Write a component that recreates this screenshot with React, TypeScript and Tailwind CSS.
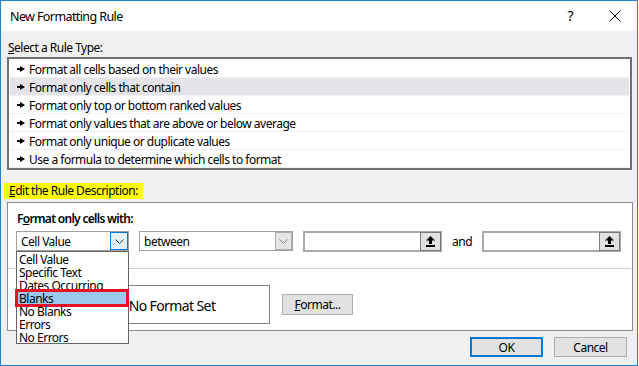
import React from "react";

const rules = [
  "Format all cells based on their values",
  "Format only cells that contain",
  "Format only top or bottom ranked values",
  "Format only values that are above or below average",
  "Format only unique or duplicate values",
  "Use a formula to determine which cells to format",
];

const options = ["Cell Value", "Specific Text", "Dates Occurring", "Blanks", "No Blanks", "Errors", "No Errors"];

function Pointer() {
  return (
    <svg width="8" height="6" viewBox="0 0 8 6" className="shrink-0">
      <rect x="0" y="2" width="5" height="2" fill="#000" />
      <polygon points="3,0 8,3 3,6" fill="#000" />
    </svg>
  );
}

function Chevron({ color = "#333" }: { color?: string }) {
  return (
    <svg width="9" height="5" viewBox="0 0 9 5">
      <polyline points="0.5,0.5 4.5,4.5 8.5,0.5" fill="none" stroke={color} strokeWidth="1" />
    </svg>
  );
}

function UpArrow() {
  return (
    <svg width="9" height="11" viewBox="0 0 9 11">
      <polygon points="4.5,0 9,4.5 6,4.5 6,8 3,8 3,4.5 0,4.5" fill="#000" />
      <rect x="0" y="9" width="9" height="2" fill="#000" />
    </svg>
  );
}

function RefBox() {
  return (
    <div className="w-[139px] h-[21px] border-2 border-[#a9a9a9] bg-white flex justify-end">
      <div className="w-[21px] h-[19px] -mt-[1px] -mr-[1px] bg-[#e1e1e1] border border-[#7a7a7a] flex items-center justify-center">
        <UpArrow />
      </div>
    </div>
  );
}

export default function App() {
  return (
    <div className="w-[639px] h-[366px] bg-white font-['Segoe_UI','Noto_Sans',sans-serif] text-[12px] tracking-[-0.5px] text-black">
      <div className="w-[638px] h-[366px] border border-[#1883d7] flex flex-col">
        {/* Title bar */}
        <div className="h-[30px] bg-white flex items-center justify-between pl-[9px] pr-[16px] shrink-0">
          <span className="text-[12.5px] tracking-[-0.6px] leading-[16px] pt-[1px]">New Formatting Rule</span>
          <div className="flex items-center gap-[36px]">
            <span className="text-[14px] leading-none">?</span>
            <svg width="12" height="12" viewBox="0 0 12 12">
              <line x1="0.5" y1="0.5" x2="11.5" y2="11.5" stroke="#000" strokeWidth="1" />
              <line x1="11.5" y1="0.5" x2="0.5" y2="11.5" stroke="#000" strokeWidth="1" />
            </svg>
          </div>
        </div>

        {/* Body */}
        <div className="flex-1 bg-[#f0f0f0] flex flex-col pt-[8px]">
          <div className="ml-[7px] h-[16px] leading-[17px]">
            <span className="underline">S</span>elect a Rule Type:
          </div>
          <div className="ml-[6px] mt-[2px] w-[625px] h-[113px] border-2 border-[#707070] bg-white p-[1px] flex flex-col">
            {rules.map((r, i) => (
              <div
                key={r}
                className={
                  "h-[18px] flex items-center gap-[4px] pl-[7px] border-b border-[#f0f0f0] " +
                  (i === 1 ? "bg-[#e4e4e8]" : "")
                }
              >
                <Pointer />
                <span className="leading-[18px] pt-[2px]">{r}</span>
              </div>
            ))}
          </div>

          <div className="ml-[3px] mt-[13px] h-[16px] leading-[16px] bg-[#ffff00] px-[5px] self-start">
            <span className="underline">E</span>dit the Rule Description:
          </div>

          {/* Panel */}
          <div className="relative ml-[6px] mt-[3px] w-[626px] h-[129px] bg-white border border-[#8a8a8a] flex flex-col">
            <div className="mt-[7px] ml-[9px] h-[16px] leading-[17px] font-semibold tracking-[-0.7px]">
              F<span className="underline">o</span>rmat only cells with:
            </div>
            <div className="mt-[5px] ml-[8px] h-[20px] flex items-center">
              <div className="w-[113px] h-[20px] border border-[#a0a0a0] flex items-center justify-between pl-[4px]">
                <span className="pt-[1px]">Cell Value</span>
                <div className="w-[18px] h-[18px] bg-[#e5f1fb] border border-[#0078d7] flex items-center justify-center">
                  <Chevron />
                </div>
              </div>
              <div className="ml-[10px] w-[154px] h-[20px] border border-[#a0a0a0] flex items-center justify-between pl-[4px]">
                <span className="pt-[1px]">between</span>
                <div className="w-[17px] h-[18px] bg-[#e5e5e5] border border-[#adadad] flex items-center justify-center">
                  <Chevron color="#888" />
                </div>
              </div>
              <div className="ml-[10px]">
                <RefBox />
              </div>
              <span className="ml-[10px] w-[20px] pt-[1px]">and</span>
              <div className="ml-[10px]">
                <RefBox />
              </div>
            </div>
            <div className="mt-[17px] mr-[1px] h-[1px] bg-[#d2d2d2]" />
            <div className="mt-[16px] ml-[66px] flex items-center">
              <div className="w-[196px] h-[39px] border border-[#808080] flex items-center justify-center text-[14px] tracking-[-0.6px] pt-[1px]">
                No Format Set
              </div>
              <button className="ml-[12px] w-[71px] h-[21px] bg-[#e1e1e1] border border-[#adadad] flex items-center justify-center text-[12px] pt-[1px]">
                <span className="underline">F</span>ormat...
              </button>
            </div>

            {/* Dropdown list overlay */}
            <div className="absolute left-[8px] top-[48px] w-[113px] h-[93px] bg-white border border-[#646464] flex flex-col">
              {options.map((o) => (
                <div
                  key={o}
                  className={
                    "relative h-[13px] leading-[13px] pl-[2px] " + (o === "Blanks" ? "bg-[#99c9ef]" : "")
                  }
                >
                  <span className="relative top-[1px]">{o}</span>
                  {o === "Blanks" && (
                    <div className="absolute -top-[2px] -bottom-[3px] -left-[2px] -right-[1px] border-[3px] border-[#e81123]" />
                  )}
                </div>
              ))}
            </div>
          </div>

          {/* Buttons */}
          <div className="mt-[6px] flex justify-end gap-[11px] pr-[10px]">
            <button className="w-[73px] h-[20px] bg-[#e1e1e1] border-2 border-[#0078d7] flex items-center justify-center text-[12px] pt-[1px]">
              OK
            </button>
            <button className="w-[73px] h-[20px] bg-[#e1e1e1] border border-[#adadad] flex items-center justify-center text-[12px] pt-[1px]">
              Cancel
            </button>
          </div>
        </div>
      </div>
    </div>
  );
}
